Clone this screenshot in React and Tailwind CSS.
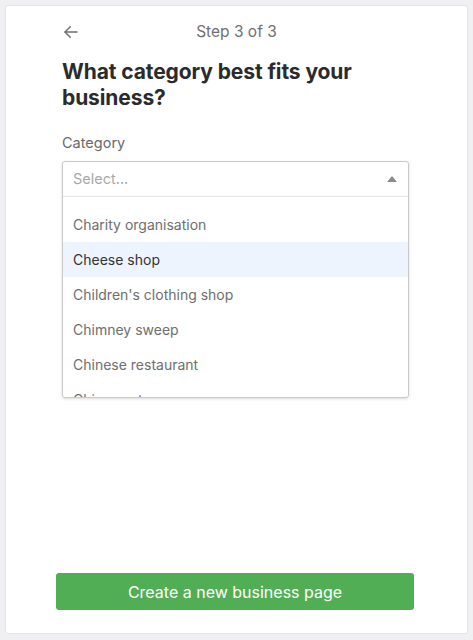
import { useState } from 'react';

const categories = [
  'Charity organisation',
  'Cheese shop',
  "Children's clothing shop",
  'Chimney sweep',
  'Chinese restaurant',
  'Chiropractor',
];

export default function App() {
  const [hovered, setHovered] = useState(1);

  return (
    <div
      className="w-[473px] h-[640px] bg-[#f0f0f3] p-[5px] pb-[6px]"
      style={{ fontFamily: 'Inter, "Noto Sans", sans-serif' }}
    >
      <div className="h-full bg-white rounded-[3px] border border-[#e4e4e8] flex flex-col">
        <div className="px-[56px] pt-[16px] flex-grow">
          <div className="relative flex items-center justify-center h-[20px]">
            <button className="absolute left-0 top-[1px] text-[#707070]">
              <svg width="18" height="18" viewBox="0 0 24 24" fill="none" stroke="currentColor" strokeWidth="2" strokeLinecap="round" strokeLinejoin="round">
                <path d="M20 12H4" />
                <path d="M11 5l-7 7 7 7" />
              </svg>
            </button>
            <span className="text-[15.5px] text-[#707070]">Step 3 of 3</span>
          </div>

          <h1 className="mt-[17px] text-[21px] leading-[26px] font-bold text-[#2b2b2b] tracking-[-0.1px] pr-[30px]">
            What category best fits your business?
          </h1>

          <label className="block mt-[21px] text-[14.5px] text-[#6a6a6a]">Category</label>

          <div className="mt-[7px] w-[347px] rounded-[3px] border border-[#c9c9c9] shadow-[0_1px_3px_rgba(0,0,0,0.15)]">
            <div className="h-[35px] flex items-center justify-between px-[10px] border-b border-[#e6e6e6]">
              <span className="text-[14.5px] text-[#a8a8a8]">Select...</span>
              <svg width="10" height="6" viewBox="0 0 10 6" className="mr-[1px]">
                <path d="M0 6L5 0L10 6Z" fill="#8a8a8a" />
              </svg>
            </div>
            <div className="h-[200px] overflow-hidden pt-[10px]">
              {categories.map((c, i) => (
                <div
                  key={c}
                  onMouseEnter={() => setHovered(i)}
                  className={
                    'h-[35px] flex items-center px-[10px] text-[14px] ' +
                    (hovered === i ? 'bg-[#edf4fd] text-[#333]' : 'text-[#6e6e6e]')
                  }
                >
                  {c}
                </div>
              ))}
            </div>
          </div>
        </div>

        <div className="px-[50px] pb-[23px]">
          <button className="w-[358px] h-[37px] rounded-[3px] bg-[#52ae55] text-white text-[16px]">
            Create a new business page
          </button>
        </div>
      </div>
    </div>
  );
}
